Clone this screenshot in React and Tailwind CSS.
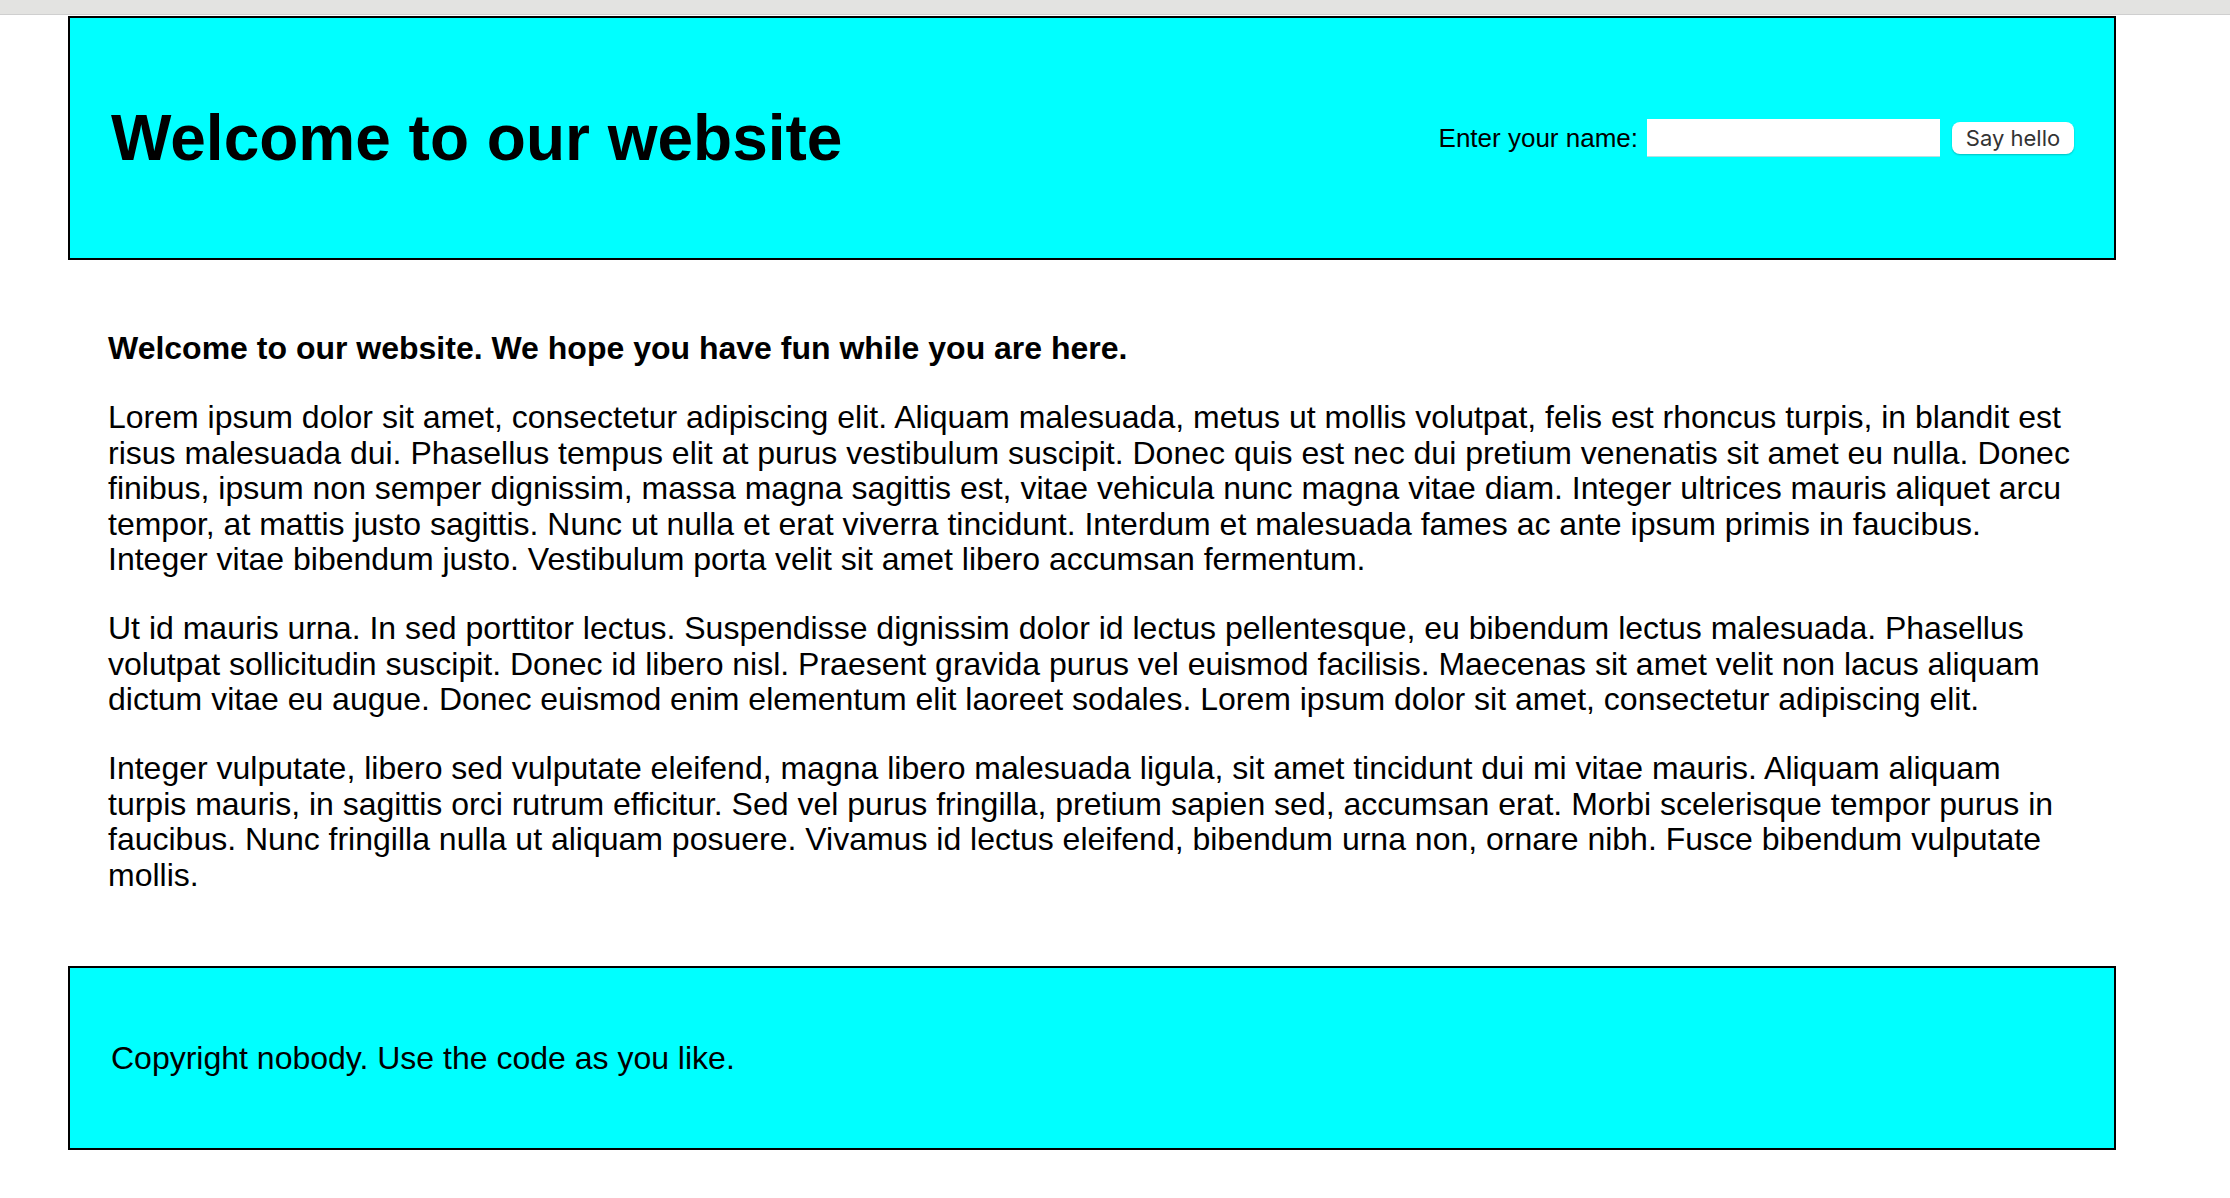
import React, { useState } from "react";

const paragraphs = [
  "Lorem ipsum dolor sit amet, consectetur adipiscing elit. Aliquam malesuada, metus ut mollis volutpat, felis est rhoncus turpis, in blandit est risus malesuada dui. Phasellus tempus elit at purus vestibulum suscipit. Donec quis est nec dui pretium venenatis sit amet eu nulla. Donec finibus, ipsum non semper dignissim, massa magna sagittis est, vitae vehicula nunc magna vitae diam. Integer ultrices mauris aliquet arcu tempor, at mattis justo sagittis. Nunc ut nulla et erat viverra tincidunt. Interdum et malesuada fames ac ante ipsum primis in faucibus. Integer vitae bibendum justo. Vestibulum porta velit sit amet libero accumsan fermentum.",
  "Ut id mauris urna. In sed porttitor lectus. Suspendisse dignissim dolor id lectus pellentesque, eu bibendum lectus malesuada. Phasellus volutpat sollicitudin suscipit. Donec id libero nisl. Praesent gravida purus vel euismod facilisis. Maecenas sit amet velit non lacus aliquam dictum vitae eu augue. Donec euismod enim elementum elit laoreet sodales. Lorem ipsum dolor sit amet, consectetur adipiscing elit.",
  "Integer vulputate, libero sed vulputate eleifend, magna libero malesuada ligula, sit amet tincidunt dui mi vitae mauris. Aliquam aliquam turpis mauris, in sagittis orci rutrum efficitur. Sed vel purus fringilla, pretium sapien sed, accumsan erat. Morbi scelerisque tempor purus in faucibus. Nunc fringilla nulla ut aliquam posuere. Vivamus id lectus eleifend, bibendum urna non, ornare nibh. Fusce bibendum vulputate mollis.",
];

export default function App() {
  const [name, setName] = useState("");

  return (
    <div className="min-h-screen bg-white text-black font-['Liberation_Sans',Arial,sans-serif]">
      {/* browser chrome strip */}
      <div className="h-[15px] bg-[#e3e3e1] border-b border-[#cfcfcf]" />

      <header className="mt-[1px] ml-[68px] w-[2048px] h-[244px] border-2 border-black bg-[#00ffff] flex items-center justify-between pl-[41px] pr-[40px]">
        <h1 className="text-[64px] font-bold leading-none">Welcome to our website</h1>
        <div className="flex items-center">
          <label className="text-[26px] leading-none">Enter your name:</label>
          <input
            value={name}
            onChange={(e) => setName(e.target.value)}
            className="ml-[9px] w-[293px] h-[38px] bg-white border-b border-[#b9dede] outline-none px-2 text-[24px]"
          />
          <button className="ml-[12px] w-[122px] h-[32px] bg-white rounded-[8px] shadow-[0_1px_2px_rgba(0,0,0,0.25)] text-[22px] text-[#333] font-['Inter',sans-serif] leading-none">
            Say hello
          </button>
        </div>
      </header>

      <main className="ml-[108px] w-[1975px] pt-[71px] text-[32px] leading-[35.5px]">
        <p className="font-bold">
          Welcome to our website. We hope you have fun while you are here.
        </p>
        {paragraphs.map((text, i) => (
          <p key={i} className="mt-[33.5px]">
            {text}
          </p>
        ))}
      </main>

      <footer className="mt-[73px] ml-[68px] w-[2048px] h-[184px] border-2 border-black bg-[#00ffff] flex items-center pl-[41px]">
        <p className="text-[32px] leading-none">Copyright nobody. Use the code as you like.</p>
      </footer>
    </div>
  );
}
